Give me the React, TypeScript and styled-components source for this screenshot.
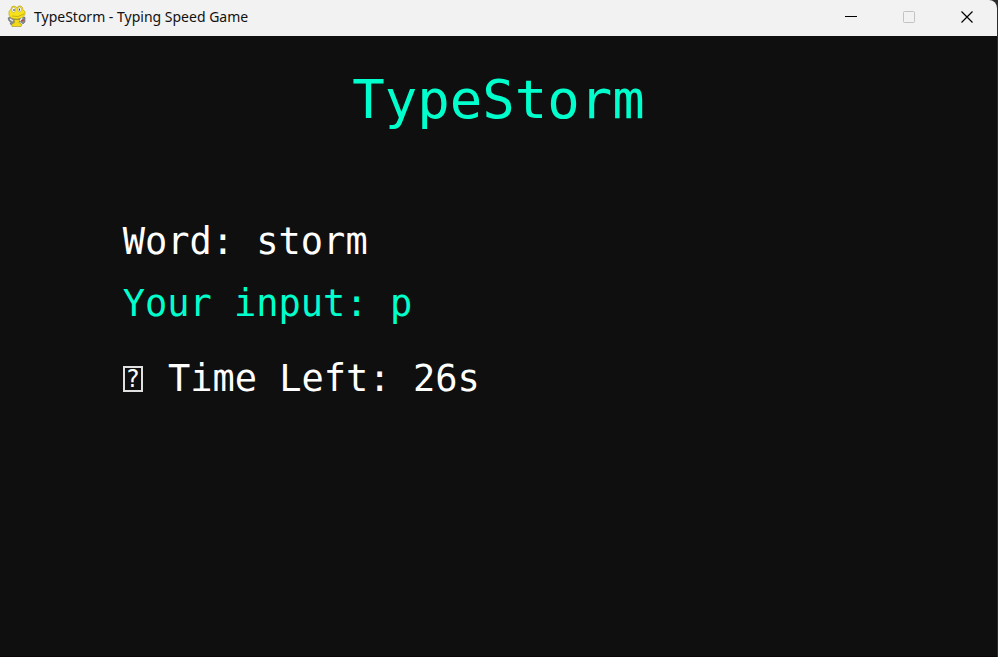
import React, { useState } from "react";
import styled, { createGlobalStyle } from "styled-components";

const GlobalStyle = createGlobalStyle`
  * { box-sizing: border-box; }
  html, body, #root { height: 100%; }
  body { margin: 0; background: #2b2b2b; overflow: hidden; }
`;

const Window = styled.div`
  display: flex;
  flex-direction: column;
  min-height: 100vh;
  margin-right: 1px;
  border-radius: 0 8px 0 0;
  overflow: hidden;
  background: #0f0f0f;
  border-bottom: 1px solid #0a0506;
`;

const TitleBar = styled.header`
  display: flex;
  align-items: center;
  height: 36px;
  padding: 0 1px 0 7px;
  background: #f2f2f2;
`;

const AppIcon = styled.svg`
  flex: none;
  width: 20px;
  height: 22px;
  margin: 0 7px 4px 0;
`;

const Caption = styled.span`
  flex: 1;
  padding-bottom: 3px;
  color: #111;
  font: 14px/20px "Noto Sans", "Open Sans", sans-serif;
  white-space: nowrap;
`;

const Controls = styled.div`
  display: flex;
  align-self: stretch;
`;

const ControlButton = styled.button`
  display: flex;
  align-items: center;
  justify-content: center;
  width: 58px;
  padding: 0 0 2px;
  border: 0;
  background: transparent;
  color: #000;
  &:disabled { color: #c2c2c2; }
`;

const Screen = styled.main`
  flex: 1;
  color: #fff;
  font-family: "DejaVu Sans Mono", monospace;
`;

const Title = styled.h1`
  margin: 32px 0 88px;
  color: #00ffcc;
  font-size: 54px;
  font-weight: 400;
  line-height: 64px;
  text-align: center;
`;

const Stats = styled.div`
  display: flex;
  flex-direction: column;
  padding-left: calc(12% + 3px);
  font-size: 37px;
  line-height: 44px;
  white-space: pre;
`;

const Line = styled.div`
  display: flex;
  align-items: center;
`;

const InputLine = styled(Line)`
  margin: 18px 0 31px;
  color: #00ffcc;
`;

const Entry = styled.input`
  flex: 1;
  min-width: 0;
  height: 44px;
  padding: 0;
  border: 0;
  outline: 0;
  background: transparent;
  color: inherit;
  font: inherit;
`;

const MissingGlyph = styled.span`
  display: flex;
  align-items: center;
  justify-content: center;
  width: 20px;
  height: 26px;
  margin-right: 3px;
  border: 2px solid #e0e0e0;
  font-size: 24px;
  line-height: 22px;
`;

function SnakeIcon() {
  return (
    <AppIcon viewBox="0 0 20 22" aria-hidden="true">
      <path d="M3 12 L1 13 2 16 4 17 3 19 6 20 8 17 14 17 16 19 18 17 18 12 15 13Z" fill="#8b8f90" stroke="#4c5050" strokeWidth=".5" />
      <path d="M4 4 Q4 1 7 1 Q9 1 10 3 Q11 0 14 1 Q16 2 16 5 Q19 6 18 9 Q17 13 10 14 Q3 14 2 10 Q1 6 4 4Z" fill="#f7e11a" stroke="#a8921c" strokeWidth=".5" />
      <ellipse cx="6.6" cy="4.8" rx="1.8" ry="2.5" fill="#fff" stroke="#99905e" strokeWidth=".5" />
      <ellipse cx="12.6" cy="4.4" rx="1.8" ry="2.5" fill="#fff" stroke="#99905e" strokeWidth=".5" />
      <path d="M7 4v2M12.4 3.6v2" stroke="#333" />
      <path d="M5 11 Q11 13 17 9" fill="none" stroke="#b39b16" strokeWidth=".7" />
      <path d="M7 14.5h6l-1 3 3 2-1 2H5l-.5-2 3-2z" fill="#f0d916" stroke="#8d7d20" strokeWidth=".5" />
      <path d="M3 14l3 2M15 13l-2 3" stroke="#e6eaea" strokeWidth="1.4" />
      <path d="M14 16l3-1" stroke="#c4484a" strokeWidth="1.6" />
    </AppIcon>
  );
}

export default function App() {
  const [typed, setTyped] = useState("p");
  return (
    <>
      <GlobalStyle />
      <Window>
        <TitleBar>
          <SnakeIcon />
          <Caption>TypeStorm - Typing Speed Game</Caption>
          <Controls>
            <ControlButton aria-label="Minimize">
              <svg width="12" height="12" viewBox="0 0 12 12"><path d="M0 5.5h12" stroke="currentColor" /></svg>
            </ControlButton>
            <ControlButton aria-label="Maximize" disabled>
              <svg width="12" height="12" viewBox="0 0 12 12"><rect x=".5" y=".5" width="11" height="11" rx="1" fill="none" stroke="currentColor" /></svg>
            </ControlButton>
            <ControlButton aria-label="Close">
              <svg width="12" height="12" viewBox="0 0 12 12"><path d="M.5.5l11 11M11.5.5l-11 11" stroke="currentColor" strokeWidth="1.2" /></svg>
            </ControlButton>
          </Controls>
        </TitleBar>
        <Screen>
          <Title>TypeStorm</Title>
          <Stats>
            <Line>Word: storm</Line>
            <InputLine>
              <label htmlFor="typed">Your input: </label>
              <Entry id="typed" value={typed} autoComplete="off" spellCheck={false} onChange={(e) => setTyped(e.target.value)} />
            </InputLine>
            <Line>
              <MissingGlyph>?</MissingGlyph>
              <span> Time Left: 26s</span>
            </Line>
          </Stats>
        </Screen>
      </Window>
    </>
  );
}
